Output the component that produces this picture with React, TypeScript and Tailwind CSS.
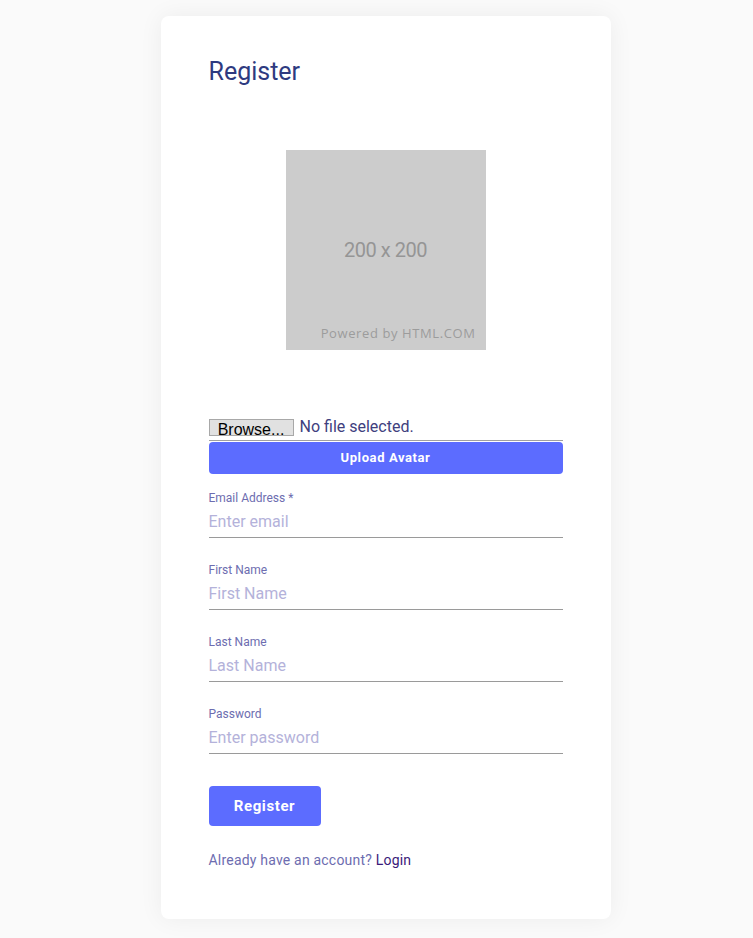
export default function App() {
  const fields = [
    { label: "Email Address *", placeholder: "Enter email", type: "email" },
    { label: "First Name", placeholder: "First Name", type: "text" },
    { label: "Last Name", placeholder: "Last Name", type: "text" },
    { label: "Password", placeholder: "Enter password", type: "password" },
  ];

  return (
    <div className="flex min-h-[938px] justify-center bg-[#fafafa] pt-[16px] pb-[20px] pl-[18px] font-['Roboto',sans-serif]">
      <div className="h-fit w-[450px] rounded-[8px] bg-white px-[48px] pt-[40px] pb-[48px] shadow-[0_0_24px_rgba(0,0,0,0.06)]">
        <h1 className="text-[25px] leading-[32px] text-[#2e3a80]">Register</h1>

        {/* placeholder avatar */}
        <div className="mt-[62px] flex justify-center">
          <div className="relative flex h-[200px] w-[200px] items-center justify-center bg-[#cccccc]">
            <span className="text-[20px] tracking-[-0.5px] text-[#959595]">200 x 200</span>
            <span className="absolute right-[10px] bottom-[7px] font-['Open_Sans',sans-serif] text-[13px] tracking-[0.6px] text-[#9c9c9c]">
              Powered by HTML.COM
            </span>
          </div>
        </div>

        <div className="mt-[68px] flex items-end border-b border-[#a0a0a0] pb-[4px]">
          <span className="flex h-[17px] w-[85px] items-center justify-center border border-[#a8a8a8] bg-[#e1e1e1] pt-[5px] font-['Liberation_Sans',sans-serif] text-[16px] text-black">
            Browse...
          </span>
          <span className="ml-[6px] text-[16px] leading-[18px] text-[#40407e]">No file selected.</span>
        </div>
        <button className="mt-px flex h-[32px] w-full items-center justify-center rounded-[4px] bg-[#5c6cff] text-[13px] font-bold tracking-[0.6px] text-white">
          Upload Avatar
        </button>

        <div className="mt-[16px] flex flex-col gap-[24px]">
          {fields.map((f) => (
            <label key={f.label} className="flex flex-col">
              <span className="text-[12px] leading-[16px] text-[#6d6db0]">{f.label}</span>
              <input
                type={f.type}
                placeholder={f.placeholder}
                className="h-[32px] w-full border-b border-[#9a9a9a] bg-transparent text-[16px] text-[#333] outline-none placeholder:text-[#b4b2da]"
              />
            </label>
          ))}
        </div>

        <button className="mt-[32px] h-[40px] w-[112px] rounded-[4px] bg-[#5c6cff] text-[15px] font-bold tracking-[0.6px] text-white">
          Register
        </button>

        <p className="mt-[24px] text-[14px] tracking-[0.2px] text-[#6d6db0]">
          Already have an account? <a className="text-[#3a1a7a]">Login</a>
        </p>
      </div>
    </div>
  );
}
